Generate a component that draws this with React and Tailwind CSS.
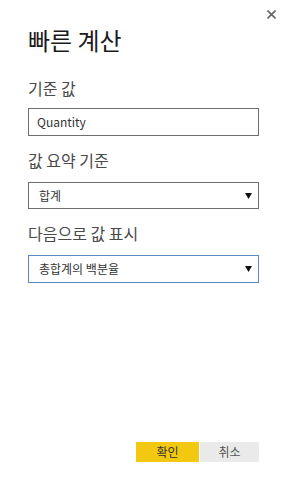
export default function App() {
  const font = { fontFamily: '"Noto Sans CJK KR", "Noto Sans", sans-serif' };

  return (
    <div className="relative w-[284px] h-[486px] bg-white text-[#252423] flex flex-col" style={font}>
      <button className="absolute top-[8px] right-[7px] w-[12px] h-[12px] flex items-center justify-center text-[#666]">
        <svg width="9" height="9" viewBox="0 0 9 9">
          <path d="M0.5 0.5 L8.5 8.5 M8.5 0.5 L0.5 8.5" stroke="#666" strokeWidth="1.6" />
        </svg>
      </button>

      <div className="pl-[28px] pr-[25px] pt-[26px]">
        <h1 className="text-[24px] leading-[28px] font-normal text-[#1b1b1b]">빠른 계산</h1>

        <div className="mt-[24px] text-[16px] leading-[20px] text-[#4a4a4a]">기준 값</div>
        <div className="mt-[10px] h-[28px] border border-[#6f6f6f] flex items-center px-[8px] text-[12px] text-[#333]">
          Quantity
        </div>

        <div className="mt-[14px] text-[16px] leading-[20px] text-[#4a4a4a]">값 요약 기준</div>
        <div className="mt-[12px] h-[27px] border border-[#6f6f6f] flex items-center justify-between pl-[10px] pr-[6px] text-[12px] text-[#333]">
          <span>합계</span>
          <svg width="7" height="6" viewBox="0 0 7 6"><polygon points="0,0 7,0 3.5,6" fill="#111" /></svg>
        </div>

        <div className="mt-[14px] text-[16px] leading-[20px] text-[#4a4a4a]">다음으로 값 표시</div>
        <div className="mt-[12px] h-[28px] border border-[#5b87c5] flex items-center justify-between pl-[10px] pr-[6px] text-[12px] text-[#333]">
          <span>총합계의 백분율</span>
          <svg width="7" height="6" viewBox="0 0 7 6"><polygon points="0,0 7,0 3.5,6" fill="#111" /></svg>
        </div>
      </div>

      <div className="mt-auto mb-[24px] flex justify-end gap-[1px] pr-[25px]">
        <button className="w-[63px] h-[20px] bg-[#f2c811] text-[12px] leading-[20px] text-[#333]">확인</button>
        <button className="w-[59px] h-[20px] bg-[#eaeaea] text-[12px] leading-[20px] text-[#555]">취소</button>
      </div>
    </div>
  );
}
